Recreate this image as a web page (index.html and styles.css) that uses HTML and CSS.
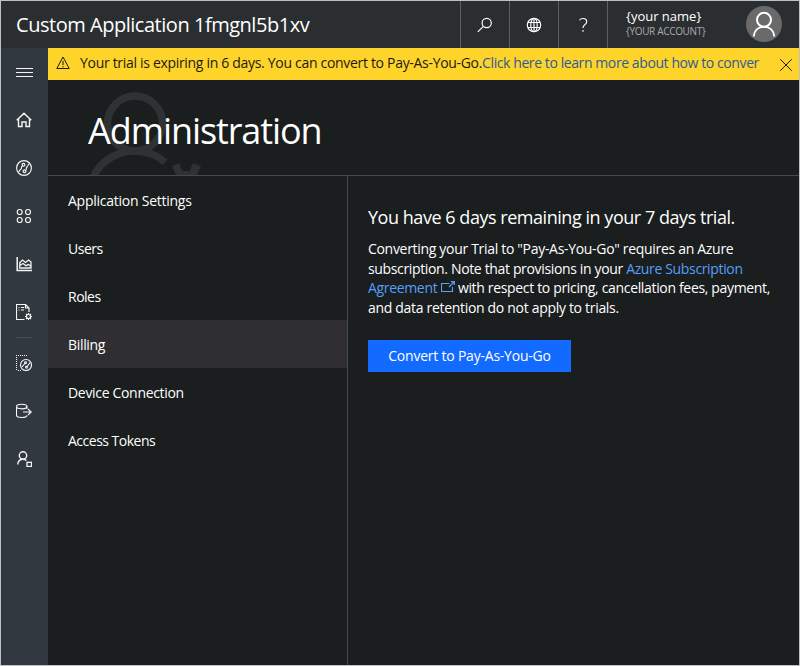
FILE: index.html
```html
<!DOCTYPE html>
<html lang="en">
<head>
<meta charset="utf-8">
<title>Administration</title>
<link rel="stylesheet" href="styles.css">
</head>
<body>
<div class="app">
  <header class="topbar">
    <div class="app-title"><span>Custom Application 1fmgnl5b1xv</span></div>
    <div class="tool"><svg width="16" height="16" viewBox="0 0 16 16"><circle cx="9.7" cy="6" r="4.6"/><path d="M6.4 9.3L.8 14.9"/></svg></div>
    <div class="tool"><svg width="16" height="16" viewBox="0 0 16 16"><circle cx="8" cy="8" r="6.7"/><ellipse cx="8" cy="8" rx="3.2" ry="6.7"/><path d="M8 1.3v13.4M2 5.5h12M2 10.5h12"/></svg></div>
    <div class="tool"><svg width="16" height="16" viewBox="0 0 16 16"><path d="M4.5 3.2C5.3 2 6.5 1.5 8 1.5c2.2 0 3.7 1.2 3.7 3.2C11.7 7.600 8 7.800 8 11M8 13v1.700"/></svg></div>
    <div class="account">
      <div class="who"><span class="name">{your name}</span><span class="tenant">{YOUR ACCOUNT}</span></div>
      <svg class="avatar" width="36" height="36" viewBox="0 0 36 36"><circle class="disc" cx="18" cy="18" r="18"/><circle cx="18" cy="13.800" r="7"/><path d="M7.700 30.500C8.200 24.500 12.200 20.800 18 20.800s9.800 3.700 10.300 9.700"/></svg>
    </div>
  </header>
  <div class="body">
    <nav class="rail">
      <a><svg width="18" height="16" viewBox="0 0 18 16"><path class="crisp" d="M0 4.500h17M0 8.500h17M0 12.500h17"/></svg></a>
      <a><svg width="16" height="16" viewBox="0 0 16 16"><path d="M.7 8.300L8 1.300l7.300 7M2.500 7v7.500h3.500v-4.500h4v4.500h3.500V7" stroke-width="1.400"/></svg></a>
      <a><svg width="16" height="16" viewBox="0 0 16 16"><circle cx="8" cy="8" r="7.400"/><circle cx="7.500" cy="4.800" r="1.400"/><circle cx="8.500" cy="11.200" r="1.400"/><path d="M6.500 6C4 8 6.500 8.500 4.500 9.500L2.500 12M9.700 10.300C11 9.500 9.500 8.500 11 7L13.200 3.500"/></svg></a>
      <a><svg width="16" height="16" viewBox="0 0 16 16"><circle cx="3.700" cy="4" r="2.500"/><circle cx="12" cy="4" r="2.500"/><circle cx="3.700" cy="12" r="2.500"/><circle cx="12" cy="12" r="2.500"/></svg></a>
      <a><svg width="16" height="16" viewBox="0 0 16 16"><path d="M1.200 1v13.500H16" stroke-width="1.500"/><path d="M3.800 12V6.500L6.500 4l3 2.500L12.500 4l2.500 2v6zM3.800 9.500L7 7.500l3 2.200 2.500-1.200 2.500 2" stroke-width="1.300"/></svg></a>
      <a><svg width="16" height="16" viewBox="0 0 16 16"><path d="M8.500 15.500h-8V.5h9l3.500 3.500v4M9.500.5V4h3.500M2.500 3.500h1M5 3.500h3M2.500 6h1M5 6h3"/><circle cx="12.500" cy="12.500" r="2"/><path d="M12.500 9v1.500M12.500 14.500V16M9 12.500h1.500M14.500 12.500H16M10 10l1 1M14 14l1 1M15 10l-1 1M11 14l-1 1"/></svg></a>
      <span class="rail-rule"></span>
      <a><svg width="16" height="16" viewBox="0 0 16 16"><path d="M0 .5h12M.5 2v14M2 15.500h3" stroke-dasharray="1 1"/><circle cx="10" cy="10" r="5.500"/><circle cx="9.500" cy="7.700" r=".9"/><circle cx="10.500" cy="12.300" r=".9"/><path d="M8.800 8.500L6 12M11.300 11.500L14 7.500"/></svg></a>
      <a><svg width="16" height="16" viewBox="0 0 16 16"><ellipse cx="5.700" cy="3.500" rx="5.200" ry="2.300"/><path d="M.5 3.500v8.700c0 1.300 2.300 2.300 5.200 2.300s5.200-1 5.200-2.300M10.900 3.500v2.500"/><path d="M7 9h8M12 6l3.200 3L12 12"/></svg></a>
      <a><svg width="16" height="16" viewBox="0 0 16 16"><circle cx="7" cy="4.500" r="3.700" stroke-width="1.400"/><path d="M1.700 13.500C2 10.500 4 8.300 7 8.300c1.400 0 2.500.4 3.400 1.200" stroke-width="1.400"/><rect x="11" y="11.300" width="4.500" height="4.200" stroke-width="1.300"/></svg></a>
    </nav>
    <main class="main">
      <div class="banner">
        <svg class="warn" width="14" height="14" viewBox="0 0 14 14"><path d="M7 1L13.200 12.500H.8zM7 4.800v4.300M7 10.100v1.200"/></svg>
        <div class="message"><span>Your trial is expiring in 6 days. You can convert to Pay-As-You-Go.</span><a>Click here to learn more about how to conver</a></div>
        <svg class="close" width="14" height="14" viewBox="0 0 14 14"><path d="M1.200 1.200l11.600 11.600M12.800 1.200L1.200 12.800"/></svg>
      </div>
      <div class="hero">
        <svg class="hero-art" width="130" height="95" viewBox="0 0 130 95"><circle cx="47" cy="43.500" r="27.500"/><path d="M4 101C9 85 25 71 47 71c12 0 22 4 30 11.300"/><path class="gear" d="M84 86l7-2.700 3.500 7.700h7l3.500-7.700 8 2.700-4 9H88z"/></svg>
        <h1><span>Administration</span></h1>
      </div>
      <div class="columns">
        <nav class="menu">
          <a class="t1">Application Settings</a>
          <a class="t3">Users</a>
          <a class="t3">Roles</a>
          <a class="active t2">Billing</a>
          <a class="t2">Device Connection</a>
          <a class="t3">Access Tokens</a>
        </nav>
        <section class="content">
          <h2>You have 6 days remaining in your 7 days trial.</h2>
          <p><span>Converting your Trial to "Pay-As-You-Go" requires an Azure</span><br>
          <span class="l2">subscription. Note that provisions in your <a>Azure Subscription</a></span><br>
          <span class="l3"><a>Agreement <svg width="14" height="12" viewBox="0 0 14 12"><path d="M8.500 2.500H.5v8h11V6M8 6L13 1M9.800.600h3.500v3.500"/></svg></a> with respect to pricing, cancellation fees, payment,</span><br>
          <span>and data retention do not apply to trials.</span></p>
          <button>Convert to Pay-As-You-Go</button>
        </section>
      </div>
    </main>
  </div>
</div>
</body>
</html>
```
FILE: styles.css
```css
* { box-sizing: border-box; }
body { margin: 0; font-family: "Open Sans", "Noto Sans", sans-serif; font-size: 14px; color: #fff; }
svg { fill: none; stroke: currentColor; stroke-width: 1.15; flex: none; }
.crisp { shape-rendering: crispEdges; stroke-width: 1; }
.app { width: 800px; height: 666px; border: 1px solid #bec1c1; background: #1a1e1e; display: flex; flex-direction: column; overflow: hidden; white-space: nowrap; }
.topbar { height: 47px; flex: none; background: #2a2e31; display: flex; }
.app-title { flex: 1; padding-left: 15px; font-size: 20px; line-height: 48px; letter-spacing: -0.47px; }
.tool { width: 49px; border-left: 1px solid #5c6063; display: flex; align-items: center; justify-content: center; }
.account { width: 192px; border-left: 1px solid #5c6063; display: flex; justify-content: space-between; padding: 5px 17px 0 18px; }
.who { display: flex; flex-direction: column; padding-top: 2px; }
.name { font-size: 13px; line-height: 17px; }
.tenant { font-size: 10px; line-height: 13px; letter-spacing: -0.33px; color: #a9abac; }
.avatar { stroke-width: 2; }
.disc { fill: #6a6a6a; stroke: none; }
.body { flex: 1; display: flex; min-height: 0; }
.rail { width: 47px; flex: none; background: #31383f; display: flex; flex-direction: column; }
.rail a { height: 48px; display: flex; align-items: center; padding-left: 15px; color: #f4f5f6; }
.rail-rule { height: 1px; width: 16px; margin: 1px 0 1px 15px; background: #464b50; }
.main { flex: 1; min-width: 0; display: flex; flex-direction: column; }
.banner { height: 32px; flex: none; background: #ffd42a; color: #1d1b10; display: flex; align-items: center; padding: 0 6px 0 8px; }
.banner svg { stroke-width: 1; }
.warn { margin-bottom: 2px; }
.message { width: 682px; margin: 0 0 2px 10px; line-height: 30px; overflow: hidden; letter-spacing: -0.31px; }
.message a { color: #2d5c92; letter-spacing: -0.41px; }
.close { margin: 1px 0 0 auto; }
.hero { height: 96px; flex: none; border-bottom: 1px solid #46494a; display: grid; }
.hero > * { grid-area: 1 / 1; }
.hero-art { margin-left: 40px; stroke: #2e3233; stroke-width: 7.5; }
.gear { fill: #2e3233; stroke: none; }
h1 { margin: 0; padding-left: 40px; font-size: 36px; font-weight: 400; line-height: 101px; letter-spacing: -1.08px; z-index: 1; }
.columns { flex: 1; display: flex; }
.menu { width: 300px; border-right: 1px solid #46494a; }
.menu a { display: block; height: 48px; line-height: 50px; padding-left: 20px; }
.menu .active { background: #2f2f33; }
.t1 { letter-spacing: -0.25px; }
.t2 { letter-spacing: -0.32px; }
.menu .t3 { letter-spacing: -0.5px; }
.content { padding: 28px 0 0 20px; }
h2 { margin: 0 0 8px; font-size: 18px; font-weight: 400; line-height: 27px; letter-spacing: -0.46px; }
p { margin: 0; line-height: 19.5px; letter-spacing: -0.31px; }
.l2 { letter-spacing: -0.35px; }
.l3 { letter-spacing: -0.335px; }
p a { color: #579ff8; }
p svg { vertical-align: 0; }
button { display: block; margin-top: 23px; width: 203px; height: 32px; padding: 0 0 1px; border: 0; background: #126aff; color: #fff; font: inherit; letter-spacing: -0.22px; }
```
